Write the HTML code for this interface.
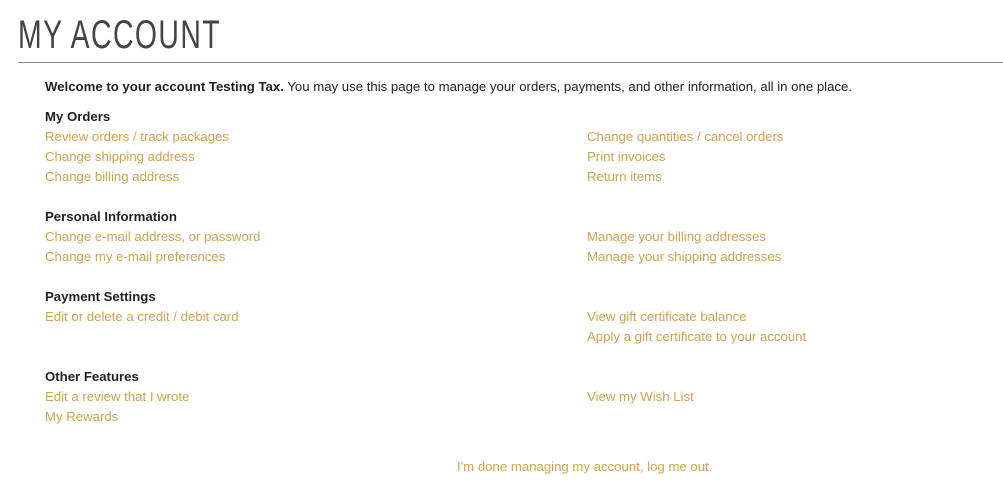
<!DOCTYPE html>
<html><head><style>
body{margin:0;width:1003px;height:503px;background:#fff;font-family:"Liberation Sans",sans-serif;font-size:13.2px;color:#222;position:relative;overflow:hidden}
h1{position:absolute;left:18px;top:11px;margin:0;font-weight:normal;font-size:40px;line-height:48px;color:#444;letter-spacing:2px;transform:scaleX(0.71);transform-origin:left top;white-space:nowrap}
.hr{position:absolute;left:18px;top:62px;width:985px;height:1px;background:#888}
.t{position:absolute;line-height:20px;white-space:nowrap}
.b{font-weight:bold}
a{color:#d3a24a;text-decoration:none}
</style></head><body>
<h1>MY ACCOUNT</h1>
<div class="hr"></div>
<div class="t" style="left:45px;top:77px"><span class="b">Welcome to your account Testing Tax.</span> You may use this page to manage your orders, payments, and other information, all in one place.</div>
<div class="t b" style="left:45px;top:107px">My Orders</div>
<div class="t" style="left:45px;top:127px"><a>Review orders / track packages</a></div>
<div class="t" style="left:45px;top:147px"><a>Change shipping address</a></div>
<div class="t" style="left:45px;top:167px"><a>Change billing address</a></div>
<div class="t" style="left:587px;top:127px"><a>Change quantities / cancel orders</a></div>
<div class="t" style="left:587px;top:147px"><a>Print invoices</a></div>
<div class="t" style="left:587px;top:167px"><a>Return items</a></div>
<div class="t b" style="left:45px;top:207px">Personal Information</div>
<div class="t" style="left:45px;top:227px"><a>Change e-mail address, or password</a></div>
<div class="t" style="left:45px;top:247px"><a>Change my e-mail preferences</a></div>
<div class="t" style="left:587px;top:227px"><a>Manage your billing addresses</a></div>
<div class="t" style="left:587px;top:247px"><a>Manage your shipping addresses</a></div>
<div class="t b" style="left:45px;top:287px">Payment Settings</div>
<div class="t" style="left:45px;top:307px"><a>Edit or delete a credit / debit card</a></div>
<div class="t" style="left:587px;top:307px"><a>View gift certificate balance</a></div>
<div class="t" style="left:587px;top:327px"><a>Apply a gift certificate to your account</a></div>
<div class="t b" style="left:45px;top:367px">Other Features</div>
<div class="t" style="left:45px;top:387px"><a>Edit a review that I wrote</a></div>
<div class="t" style="left:45px;top:407px"><a>My Rewards</a></div>
<div class="t" style="left:587px;top:387px"><a>View my Wish List</a></div>
<div class="t" style="left:457px;top:457px"><a>I'm done managing my account, log me out.</a></div>
</body></html>
